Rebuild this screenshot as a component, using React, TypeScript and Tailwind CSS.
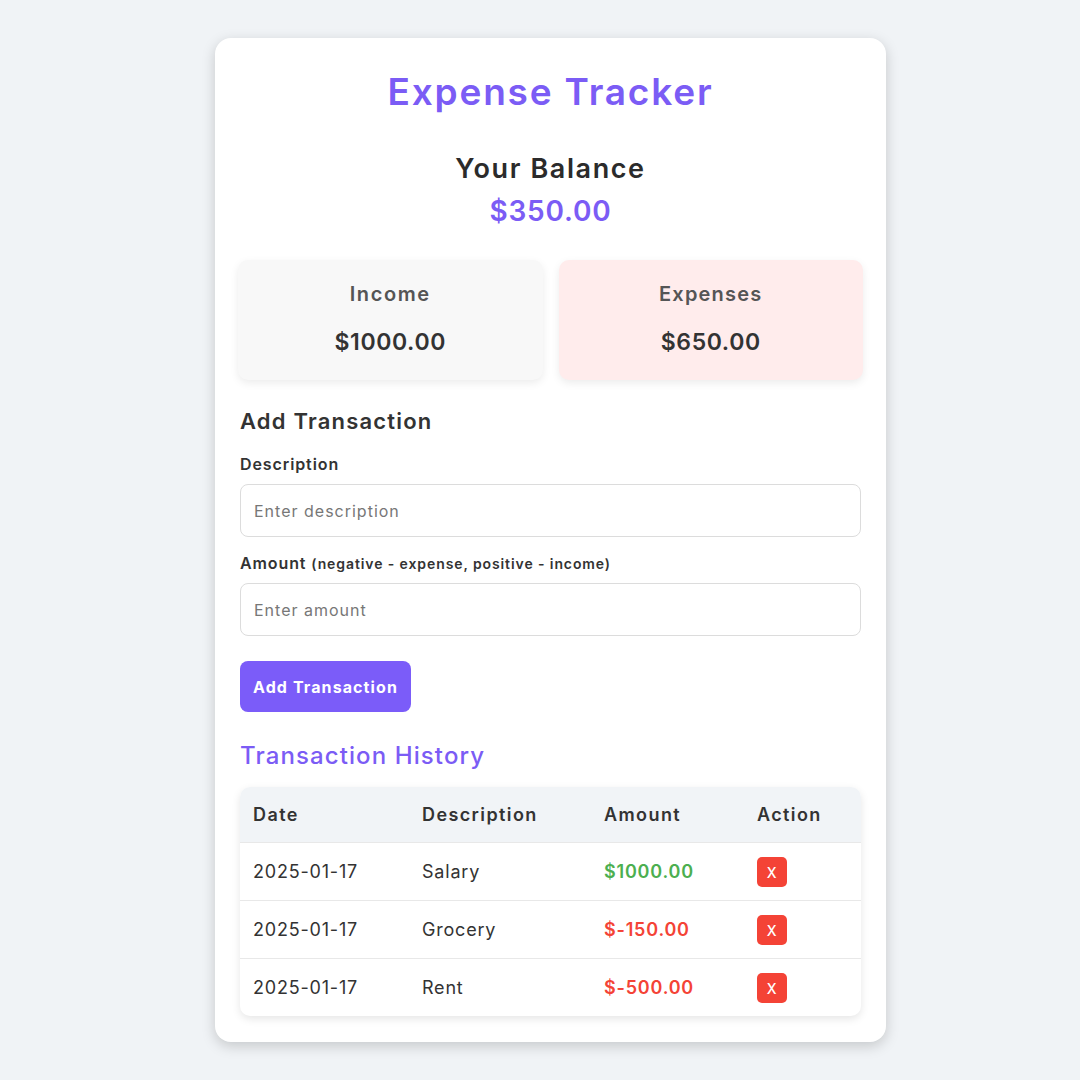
import { useState } from 'react'

interface Transaction {
  id: number;
  date: string;
  description: string;
  amount: number;
}

const initial: Transaction[] = [
  { id: 1, date: '2025-01-17', description: 'Salary', amount: 1000 },
  { id: 2, date: '2025-01-17', description: 'Grocery', amount: -150 },
  { id: 3, date: '2025-01-17', description: 'Rent', amount: -500 },
]

export default function App() {
  const [transactions, setTransactions] = useState<Transaction[]>(initial)
  const [description, setDescription] = useState('')
  const [amount, setAmount] = useState('')

  const income = transactions.filter(t => t.amount > 0).reduce((s, t) => s + t.amount, 0)
  const expenses = transactions.filter(t => t.amount < 0).reduce((s, t) => s - t.amount, 0)
  const balance = income - expenses

  const addTransaction = () => {
    const value = parseFloat(amount)
    if (!description || isNaN(value)) return
    setTransactions(prev => [
      ...prev,
      { id: Date.now(), date: new Date().toISOString().slice(0, 10), description, amount: value },
    ])
    setDescription('')
    setAmount('')
  }

  return (
    <div className="min-h-screen bg-[#f0f3f6] flex justify-center pt-[38px] pl-[21px] font-['Inter','Noto_Sans',sans-serif]">
      <div className="w-[671px] h-[1004px] bg-white rounded-[16px] shadow-[0_4px_14px_rgba(0,0,0,0.18)] px-[25px] pt-[26px]">
        <h1 className="text-center text-[37px] font-semibold text-[#7b5cf5] leading-[56px] tracking-[1.8px]">
          Expense Tracker
        </h1>
        <div className="text-center mt-[30px]">
          <h2 className="text-[27px] font-semibold text-[#2b2b2b] leading-[38px] tracking-[1.6px]">Your Balance</h2>
          <p className="text-[28px] font-semibold text-[#7b5cf5] leading-[40px] mt-[3px] tracking-[0.8px]">${balance.toFixed(2)}</p>
        </div>

        <div className="grid grid-cols-2 gap-[16px] mt-[29px] -mx-[2px]">
          <div className="h-[120px] rounded-[10px] bg-[#f8f8f8] shadow-[0_3px_8px_rgba(0,0,0,0.08)] flex flex-col items-center pt-[20px]">
            <h3 className="text-[20px] font-semibold text-[#555] leading-[28px] tracking-[1.6px]">Income</h3>
            <p className="text-[23px] font-semibold text-[#333] leading-[32px] mt-[18px] tracking-[0.6px]">${income.toFixed(2)}</p>
          </div>
          <div className="h-[120px] rounded-[10px] bg-[#ffecec] shadow-[0_3px_8px_rgba(0,0,0,0.08)] flex flex-col items-center pt-[20px]">
            <h3 className="text-[20px] font-semibold text-[#555] leading-[28px] tracking-[1.2px]">Expenses</h3>
            <p className="text-[23px] font-semibold text-[#333] leading-[32px] mt-[18px] tracking-[0.6px]">${expenses.toFixed(2)}</p>
          </div>
        </div>

        <h2 className="text-[22px] font-semibold text-[#333] leading-[32px] mt-[25px] tracking-[1.2px]">Add Transaction</h2>
        <label className="block text-[16px] font-semibold text-[#333] leading-[24px] mt-[15px] tracking-[0.9px]">Description</label>
        <input
          value={description}
          onChange={e => setDescription(e.target.value)}
          placeholder="Enter description"
          className="block w-full h-[53px] mt-[8px] px-[13px] text-[16px] tracking-[1px] rounded-[8px] border border-[#dcdcdc] outline-none placeholder:text-[#777] text-[#333]"
        />
        <label className="block text-[16px] font-semibold text-[#333] leading-[24px] mt-[14px] tracking-[0.9px]">
          Amount <span className="text-[14px]">(negative - expense, positive - income)</span>
        </label>
        <input
          value={amount}
          onChange={e => setAmount(e.target.value)}
          placeholder="Enter amount"
          className="block w-full h-[53px] mt-[7px] px-[13px] text-[16px] tracking-[1px] rounded-[8px] border border-[#dcdcdc] outline-none placeholder:text-[#777] text-[#333]"
        />
        <button
          onClick={addTransaction}
          className="mt-[25px] h-[51px] px-[13px] rounded-[8px] bg-[#7b5cf9] text-white text-[16px] font-bold tracking-[1.1px]"
        >
          Add Transaction
        </button>

        <h2 className="text-[24px] font-medium text-[#7b5cf5] leading-[34px] mt-[27px] tracking-[1.1px]">Transaction History</h2>
        <div className="mt-[14px] rounded-[10px] overflow-hidden shadow-[0_3px_8px_rgba(0,0,0,0.1)]">
          <table className="w-full text-left table-fixed">
            <thead>
              <tr className="bg-[#f1f4f7] h-[55px] text-[18px] text-[#333] tracking-[1.4px]">
                <th className="px-[13px] w-[169px] font-semibold">Date</th>
                <th className="px-[13px] w-[182px] font-semibold">Description</th>
                <th className="px-[13px] w-[153px] font-semibold">Amount</th>
                <th className="px-[13px] font-semibold">Action</th>
              </tr>
            </thead>
            <tbody>
              {transactions.map(t => (
                <tr key={t.id} className="h-[58px] border-t border-[#e8e8e8] text-[18px] text-[#333] tracking-[0.8px]">
                  <td className="px-[13px]">{t.date}</td>
                  <td className="px-[13px]">{t.description}</td>
                  <td className={`px-[13px] font-semibold ${t.amount > 0 ? 'text-[#4caf50]' : 'text-[#f44336]'}`}>
                    {t.amount > 0 ? `$${t.amount.toFixed(2)}` : `$-${Math.abs(t.amount).toFixed(2)}`}
                  </td>
                  <td className="px-[13px]">
                    <button
                      onClick={() => setTransactions(prev => prev.filter(x => x.id !== t.id))}
                      className="w-[30px] h-[30px] mt-[2px] rounded-[5px] bg-[#f44336] text-white text-[14px] font-medium flex items-center justify-center"
                    >
                      X
                    </button>
                  </td>
                </tr>
              ))}
            </tbody>
          </table>
        </div>
      </div>
    </div>
  )
}
